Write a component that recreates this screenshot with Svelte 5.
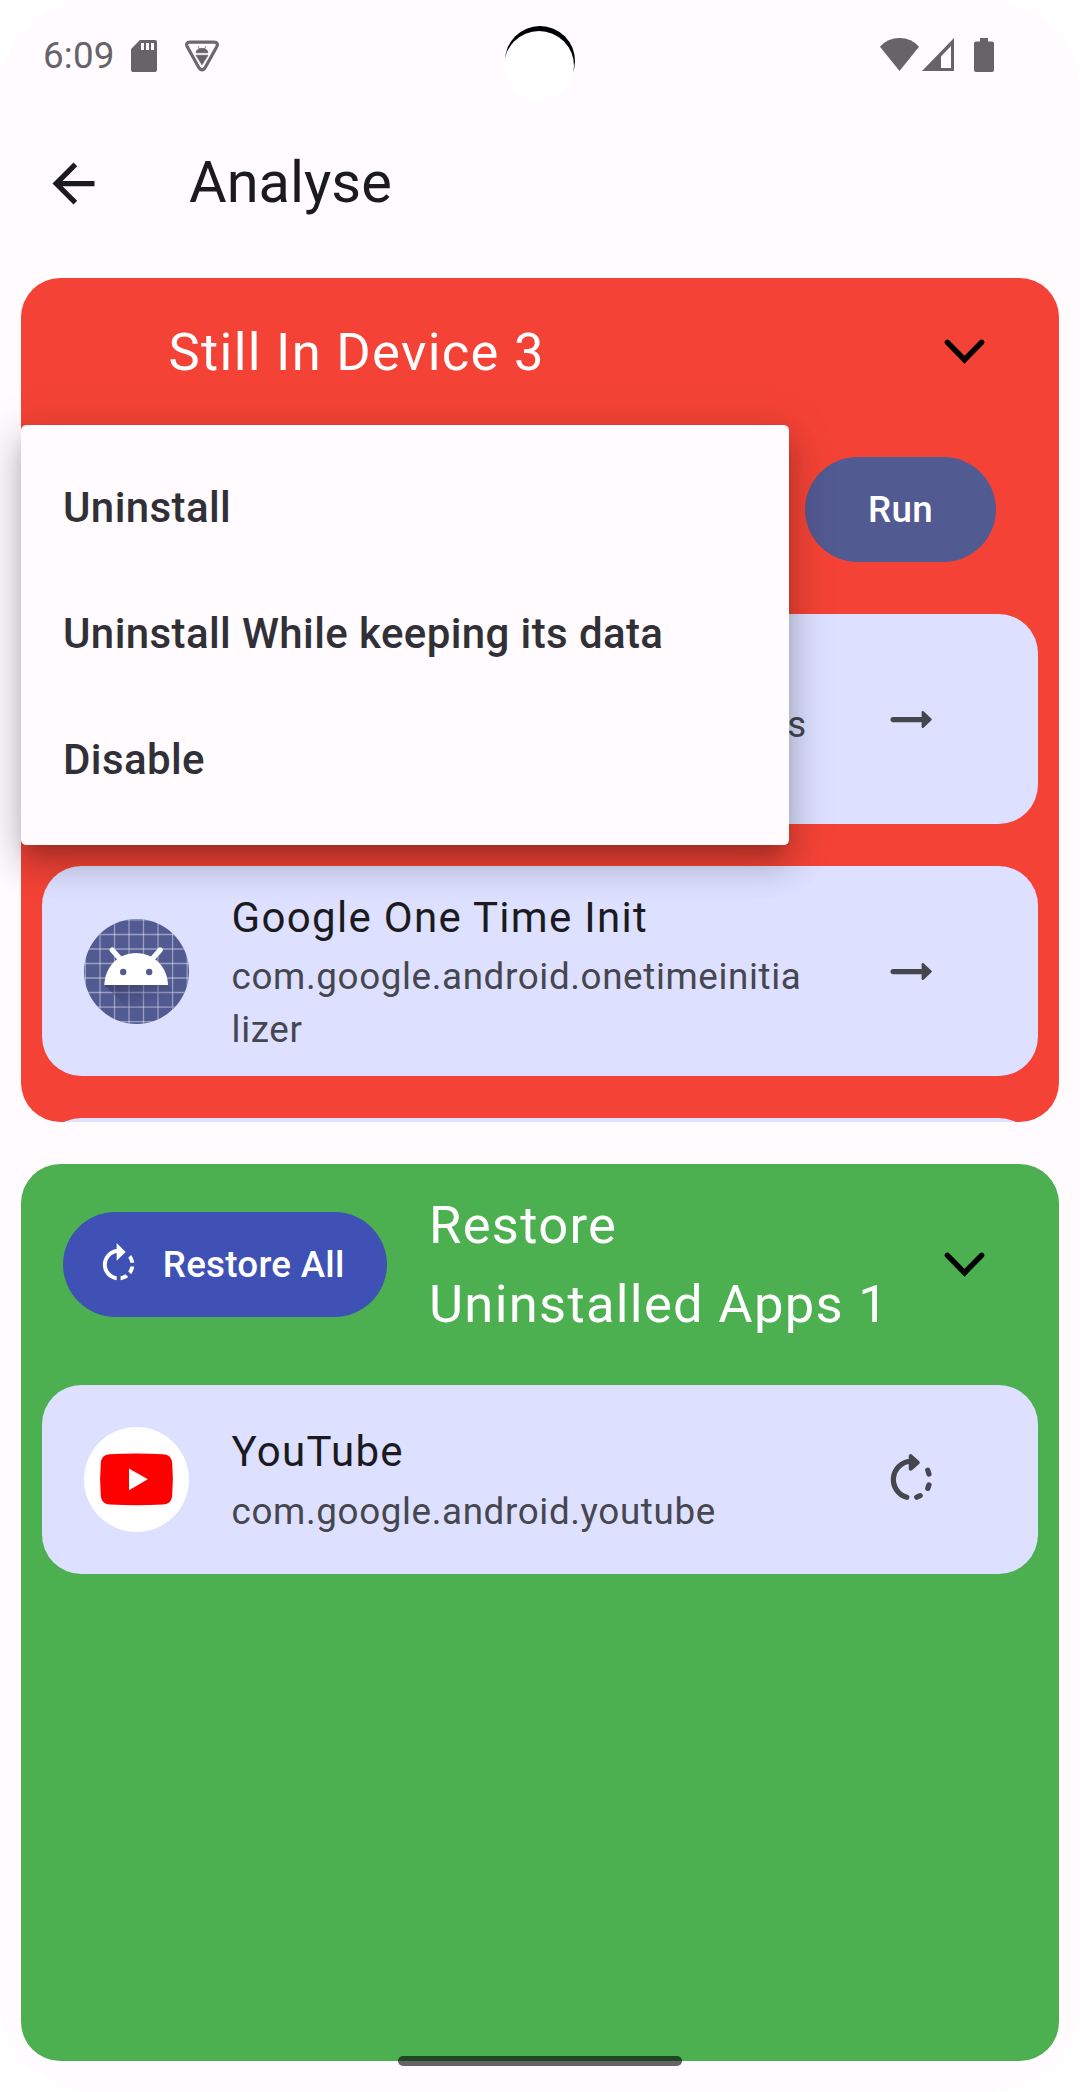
<script>
  const menu = ['Uninstall', 'Uninstall While keeping its data', 'Disable'];
  const installed = [
    { name: 'Google', id: 'com.google.android.googlequicksearchbox' },
    { name: 'Google One Time Init', id: 'com.google.android.onetimeinitializer' }
  ];
  const removed = [{ name: 'YouTube', id: 'com.google.android.youtube' }];
  const grid = [1.4, 16, 30.5, 45, 59.5, 74, 88.6, 103.2];
</script>

{#snippet androidIcon()}
  <svg class="avatar" viewBox="0 0 105 105">
    <defs>
      <clipPath id="disc"><circle cx="52.5" cy="52.5" r="52.5" /></clipPath>
      <linearGradient id="cast" x1="0" y1="0" x2="0.7" y2="1">
        <stop offset="0.1" stop-color="#30365c" stop-opacity="0.5" />
        <stop offset="0.6" stop-color="#30365c" stop-opacity="0" />
      </linearGradient>
    </defs>
    <g clip-path="url(#disc)">
      <rect width="105" height="105" fill="#525a92" />
      {#each grid as g}
        <path d="M{g} 0V105M0 {g - 0.5}H105" stroke="#fff" stroke-opacity="0.42" stroke-width="1.3" />
      {/each}
      <path d="M20.5 66H84l21 21v18H59.5Z" fill="url(#cast)" />
      <path d="M28.2 31l9 10M76.2 31l-9 10" stroke="#fff" stroke-width="5.2" stroke-linecap="round" />
      <path d="M20.3 66C21 48 34 34 52 34S83.4 48 84 66Z" fill="#fff" />
      <circle cx="39.2" cy="53" r="3.2" fill="#525a92" />
      <circle cx="65.2" cy="53" r="3.2" fill="#525a92" />
    </g>
  </svg>
{/snippet}

{#snippet youtubeIcon()}
  <svg class="avatar" viewBox="0 0 105 105">
    <circle cx="52.5" cy="52.5" r="52.5" fill="#fff" />
    <path d="M26 27.3Q52.5 25.5 79 27.3C85 27.7 87.6 30.5 88.2 36Q89.6 52 88.2 68.5C87.6 74.5 85 77 79 77.4Q52.5 79 26 77.4C20 77 17.4 74.5 16.8 68.5Q15.4 52 16.8 36C17.4 30.5 20 27.7 26 27.3Z" fill="#f00" />
    <path d="M45 41.5L63.8 52.2 45 63.2Z" fill="#fff" />
  </svg>
{/snippet}

{#snippet chevron()}
  <svg class="chevron" viewBox="0 0 24 24">
    <path d="M5.5 8.5L12 15.15 18.5 8.5" fill="none" stroke="#000" stroke-width="2.1" stroke-linecap="round" />
  </svg>
{/snippet}

{#snippet arrow()}
  <svg class="action" viewBox="0 0 24 24">
    <path d="M5 12H16.5" stroke="currentColor" stroke-width="2" stroke-linecap="round" />
    <path d="M16.3 9.2V14.8L19.3 12Z" fill="currentColor" stroke="currentColor" stroke-width="0.9" stroke-linejoin="round" />
  </svg>
{/snippet}

{#snippet restore()}
  <svg class="action" viewBox="0 0 24 24">
    <g fill="none" stroke="currentColor" stroke-width="2" stroke-linecap="round">
      <path d="M11.6 5.05A7 7 0 0 0 10.2 18.77" />
      <path d="M18.2 8.5L18.65 9.9M18.65 14.05L18.2 15.4M14 18.75L15.3 18.15" />
    </g>
    <path d="M11.7 3.1V7.9L14.4 5.5Z" fill="currentColor" stroke="currentColor" stroke-width="1.5" stroke-linejoin="round" />
  </svg>
{/snippet}

{#snippet tile(app, icon, action)}
  <article class="tile">
    {@render icon()}
    <div class="info">
      <div class="name">{app.name}</div>
      <div class="pkg">{app.id}</div>
    </div>
    {@render action()}
  </article>
{/snippet}

<div class="device">
  <div class="screen">
    <div class="status">
      <span class="clock">6:09</span>
      <svg class="sd" width="26" height="32" viewBox="0 0 26 32">
        <path fill-rule="evenodd" d="M9 0H24a2 2 0 0 1 2 2V30a2 2 0 0 1-2 2H2a2 2 0 0 1-2-2V9ZM10 3v7h3V3ZM15 3v7h3V3ZM20 3v7h3V3Z" fill="#666469" />
      </svg>
      <svg class="bug" width="34" height="32" viewBox="0 0 34 32">
        <path d="M5 2.2H29C32.5 2.2 33 4.5 31.6 7L20.5 27C18.5 30.8 15.5 30.8 13.5 27L2.4 7C1 4.5 1.5 2.2 5 2.2Z" fill="none" stroke="#6b686e" stroke-width="3.2" />
        <path d="M11 12.8C11.4 9.8 13.5 8.3 17 8.3S22.6 9.8 23 12.8ZM11 15.3H23L17 24.8ZM13.2 6l1.2 3M20.8 6l-1.2 3" fill="#666469" stroke="#666469" stroke-width="0.7" />
      </svg>
      <svg class="wifi" width="39" height="33" viewBox="0 0 39 33">
        <path d="M0 8.7Q7.5 0 19.5 0T39 8.7L19.5 33Z" fill="#666469" />
      </svg>
      <svg class="signal" width="32" height="33" viewBox="0 0 32 33">
        <path fill-rule="evenodd" d="M0 33L32 0V33ZM19 18.5V30H29V8Z" fill="#666469" />
      </svg>
      <svg class="battery" width="20" height="34" viewBox="0 0 20 34">
        <path d="M6 0H14V3.5H18a2 2 0 0 1 2 2V32a2 2 0 0 1-2 2H2a2 2 0 0 1-2-2V5.5a2 2 0 0 1 2-2H6Z" fill="#666469" />
      </svg>
      <i class="camera"></i>
    </div>

    <header class="appbar">
      <svg class="back" viewBox="0 0 24 24">
        <path d="M20 11H7.83l5.59-5.59L12 4l-8 8 8 8 1.41-1.41L7.83 13H20v-2z" fill="#1b1b1f" />
      </svg>
      <h1>Analyse</h1>
    </header>

    <section class="panel red">
      <div class="head">
        <h2>Still In Device 3</h2>
        {@render chevron()}
      </div>
      <div class="runbar">
        <button class="run">Run</button>
        <div class="menu">
          {#each menu as item}<div class="item">{item}</div>{/each}
        </div>
      </div>
      <div class="list">
        {#each installed as app}{@render tile(app, androidIcon, arrow)}{/each}
        <article class="tile"></article>
      </div>
    </section>

    <section class="panel green">
      <div class="head">
        <button class="all">
          <svg viewBox="0 0 24 24">
            <path d="M15.55 5.55L11 1v3.07C7.06 4.56 4 7.92 4 12s3.05 7.44 7 7.93v-2.02c-2.84-.48-5-2.94-5-5.91s2.16-5.43 5-5.91V10l4.55-4.45zM19.93 11c-.17-1.39-.72-2.73-1.62-3.89l-1.42 1.42c.54.75.88 1.6 1.02 2.47h2.02zM13 17.9v2.02c1.39-.17 2.74-.71 3.9-1.61l-1.44-1.44c-.75.54-1.59.89-2.46 1.03zm3.89-2.42l1.42 1.41c.9-1.16 1.45-2.5 1.62-3.89h-2.02c-.14.87-.48 1.72-1.02 2.48z" fill="#fff" />
          </svg>
          Restore All
        </button>
        <h2>Restore Uninstalled Apps 1</h2>
        {@render chevron()}
      </div>
      <div class="list">
        {#each removed as app}{@render tile(app, youtubeIcon, restore)}{/each}
      </div>
    </section>
    <i class="gesture"></i>
  </div>
</div>

<style>
  :global(body) { margin: 0; background: #fff; }
  .device { font-family: Roboto, sans-serif; background: #fff; }
  .screen {
    position: relative;
    box-sizing: border-box;
    width: 1080px;
    height: 2092px;
    border-radius: 94px;
    background: #fffbff;
    overflow: hidden;
    display: flex;
    flex-direction: column;
  }
  .status {
    position: relative;
    height: 110px;
    box-sizing: border-box;
    padding: 38px 86px 0 43px;
    display: flex;
    align-items: flex-start;
    flex: none;
  }
  .clock { width: 88px; font-size: 36.75px; line-height: 36px; letter-spacing: 0.2px; color: #666469; }
  .sd { margin-top: 2px; }
  .bug { margin: 2px auto 0 28px; }
  .signal { margin: 0 20px 0 3px; }
  .camera {
    position: absolute;
    left: 505px;
    top: 26px;
    width: 70px;
    height: 70px;
    border-radius: 50%;
    background: #000;
  }
  .camera::after {
    content: '';
    position: absolute;
    left: -1px;
    top: 5px;
    width: 70px;
    height: 70px;
    border-radius: 50%;
    background: #fff;
  }
  .appbar { height: 147px; display: flex; align-items: center; padding-left: 42px; flex: none; }
  .back { width: 63px; height: 63px; }
  h1 { margin: 0 0 0 84px; padding-bottom: 3px; font-size: 57.75px; font-weight: 400; line-height: 74px; color: #1b1b1f; }
  .panel { margin: 0 21px; border-radius: 39.4px; flex: none; }
  .red { margin-top: 21px; height: 844.4px; background: #f44336; }
  .green { margin-top: 42px; height: 896.6px; background: #4caf50; }
  .head { display: flex; align-items: center; padding-right: 63px; }
  .red .head { height: 147px; padding-left: 147.6px; box-sizing: border-box; }
  .green .head { height: 199.5px; padding-left: 42px; }
  h2 {
    margin: 0 auto 0 0;
    padding-top: 2px;
    font-size: 52.5px;
    font-weight: 400;
    line-height: 78.75px;
    letter-spacing: 1.31px;
    color: #fff;
  }
  .green h2 { margin: 0 42px; flex: 1; }
  .chevron { width: 63px; height: 63px; flex: none; }
  .runbar { position: relative; height: 168px; display: flex; align-items: center; justify-content: flex-end; padding-right: 63px; z-index: 1; }
  button {
    border: 0;
    height: 105px;
    border-radius: 53px;
    color: #fff;
    font: 500 36.75px Roboto, sans-serif;
    letter-spacing: 0.26px;
  }
  .run { width: 191px; background: #525a92; }
  .all {
    display: flex;
    align-items: center;
    gap: 21px;
    width: 324px;
    flex: none;
    padding: 0 0 0 31.5px;
    background: #3f51b5;
    white-space: nowrap;
  }
  .all svg { width: 47.25px; height: 47.25px; flex: none; }
  .menu {
    position: absolute;
    left: 0;
    top: 0;
    width: 768.4px;
    height: 420px;
    box-sizing: border-box;
    padding: 21px 42px;
    border-radius: 5.25px;
    background: #fffbff;
    box-shadow:
      0 13.1px 17.8px -7.9px rgba(0, 0, 0, 0.2),
      0 21px 32.9px 2.6px rgba(0, 0, 0, 0.14),
      0 7.9px 45px 5.25px rgba(0, 0, 0, 0.12);
  }
  .item { height: 126px; line-height: 124px; font-size: 42px; font-weight: 500; letter-spacing: 0.394px; color: #303036; }
  .list { padding: 0 21px; border-radius: 0 0 39.4px 39.4px; overflow: hidden; display: flex; flex-direction: column; gap: 42px; }
  .red .list { padding-top: 21px; height: 508.4px; }
  .green .list { padding-top: 21px; }
  .tile {
    flex: none;
    box-sizing: border-box;
    min-height: 189px;
    padding: 21px 94.8px 21px 42px;
    border-radius: 39.4px;
    background: #dde0ff;
    display: flex;
    align-items: center;
    color: #46464f;
  }
  .avatar { width: 105px; height: 105px; flex: none; }
  .info { width: 577px; margin: 0 auto 0 42.6px; }
  .name { font-size: 42px; line-height: 60px; padding: 0.5px 0 2.5px; letter-spacing: 1.31px; color: #1b1b1f; }
  .pkg { position: relative; top: 1px; font-size: 36.75px; line-height: 52.5px; letter-spacing: 0.64px; word-break: break-all; }
  .action { width: 63px; height: 63px; flex: none; }
  .gesture {
    position: absolute;
    left: 398px;
    top: 2056px;
    width: 284px;
    height: 10px;
    border-radius: 5px;
    background: rgba(0, 0, 0, 0.6);
  }
</style>
